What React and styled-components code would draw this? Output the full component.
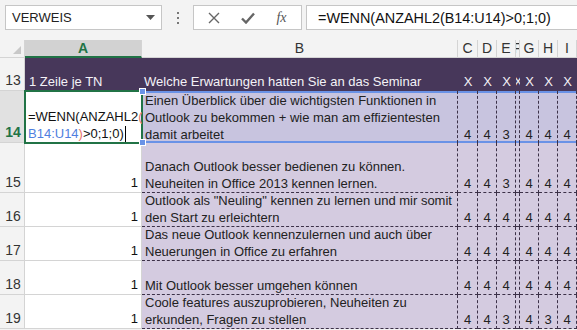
import React from "react";
import styled, { createGlobalStyle, css } from "styled-components";

const GREEN = "#217346";
const BLUE = "#6a92e6";
const PURPLE = "#47375a";
const GRID = "#d4d4d4";
const DASH = "#3c3148";

const GlobalStyle = createGlobalStyle`
  html, body {
    margin: 0;
    padding: 0;
    background: #f3f3f3;
    overflow: hidden;
  }
  body {
    font-family: "Liberation Sans", Arial, sans-serif;
  }
`;

const Page = styled.div`
  width: 577px;
  height: 330px;
  overflow: hidden;
  background: #f3f3f3;
`;

const Toolbar = styled.div`
  height: 40px;
  box-sizing: border-box;
  padding: 5px 0 0 5px;
  display: flex;
  align-items: flex-start;
`;

const Box = styled.div`
  height: 25px;
  box-sizing: border-box;
  background: #fff;
  border: 1px solid #c6c6c6;
  display: flex;
  align-items: center;
`;

const NameBox = styled(Box)`
  width: 157px;
  padding: 0 6px 0 6px;
  justify-content: space-between;
  font-size: 13px;
  color: #222;
`;

const Dots = styled.div`
  width: 31px;
  height: 25px;
  display: flex;
  flex-direction: column;
  align-items: center;
  justify-content: center;
  gap: 3px;

  span {
    width: 2px;
    height: 2px;
    background: #777;
  }
`;

const FxButtons = styled(Box)`
  width: 109px;
  justify-content: space-around;
  padding: 0 4px;
  color: #666;
`;

const FxLabel = styled.span`
  font-family: "Liberation Serif", "Times New Roman", serif;
  font-style: italic;
  font-size: 14px;
  color: #555;
`;

const FormulaBox = styled(Box)`
  flex: 1;
  margin-left: 4px;
  margin-right: -2px;
  padding-left: 11px;
  font-size: 14.4px;
  color: #111;
`;

const Sheet = styled.div`
  display: grid;
  grid-template-columns: 25px 117px 316px 20px 19px 19px 4px 19px 19px 19px;
  grid-template-rows: 18px 33px 52px 50px 34px 34px 34px 34px;
  font-size: 13px;
  line-height: 17px;
`;

const Corner = styled.div`
  background: #f3f3f3;
  border-right: 1px solid ${GRID};
  border-bottom: 1px solid ${GRID};
  box-sizing: border-box;
  position: relative;

  &::after {
    content: "";
    position: absolute;
    right: 3px;
    bottom: 3px;
    border-left: 8px solid transparent;
    border-bottom: 8px solid #c8c8c8;
  }
`;

const ColHead = styled.div`
  box-sizing: border-box;
  background: #f3f3f3;
  border-right: 1px solid ${GRID};
  border-bottom: 1px solid ${GRID};
  color: #333;
  font-size: 14px;
  display: flex;
  align-items: center;
  justify-content: center;
  overflow: hidden;

  ${(p) =>
    p.$active &&
    css`
      background: #d2d2d2;
      color: ${GREEN};
      font-weight: bold;
      border-bottom: 2px solid ${GREEN};
    `}
`;

const RowHead = styled.div`
  box-sizing: border-box;
  background: #f3f3f3;
  border-right: 1px solid ${GRID};
  border-bottom: 1px solid ${GRID};
  color: #333;
  font-size: 14px;
  display: flex;
  align-items: flex-end;
  justify-content: center;
  padding: 0 0 1px 2px;

  ${(p) =>
    p.$active &&
    css`
      background: #e1e1e1;
      color: ${GREEN};
      font-weight: bold;
    `}
`;

const HeadCell = styled.div`
  background: ${PURPLE};
  color: #f4f2f7;
  display: flex;
  align-items: flex-end;
  justify-content: ${(p) => (p.$center ? "center" : "flex-start")};
  padding: 0 0 1px ${(p) => (p.$center ? 0 : p.$pad)}px;
  white-space: nowrap;
  overflow: ${(p) => (p.$center ? "hidden" : "visible")};
  box-sizing: border-box;
`;

const CountCell = styled.div`
  box-sizing: border-box;
  background: #fff;
  border-right: 1px solid ${GRID};
  border-bottom: 1px solid ${GRID};
  display: flex;
  align-items: flex-end;
  justify-content: flex-end;
  padding: 0 3px 1px 0;
  color: #111;
`;

const EditCell = styled.div`
  position: relative;
  z-index: 2;
  background: #fff;
  box-shadow: 0 0 0 1px ${GREEN}, inset 0 0 0 1px ${GREEN};
  display: flex;
  flex-direction: column;
  justify-content: flex-end;
  padding: 0 0 1px 3px;
  overflow: hidden;
  color: #111;
  white-space: nowrap;
`;

const Ref = styled.span`
  color: ${(p) => (p.$paren ? "#e8736f" : "#4f7fe0")};
`;

const Caret = styled.span`
  display: inline-block;
  width: 1px;
  height: 16px;
  background: #000;
  vertical-align: -4px;
  margin-left: 1px;
`;

const DataCell = styled.div`
  position: relative;
  box-sizing: border-box;
  background: ${(p) => (p.$ref ? "#c8c4df" : "#d4cbe0")};
  border-right: 1px dashed ${DASH};
  border-bottom: 1px dashed ${DASH};
  display: flex;
  flex-direction: column;
  justify-content: flex-end;
  align-items: ${(p) => (p.$center ? "center" : "flex-start")};
  padding: 0 0 0 ${(p) => (p.$center ? 0 : 3)}px;
  color: #222;
  white-space: nowrap;
  overflow: ${(p) => (p.$center ? "hidden" : "visible")};

  ${(p) =>
    p.$ref &&
    css`
      border-bottom: none;
      box-shadow: inset 0 2px ${BLUE}, inset 0 -2px ${BLUE};
    `}
`;

const Handle = styled.span`
  position: absolute;
  left: -3px;
  ${(p) => (p.$bottom ? "bottom: -3px;" : "top: -3px;")}
  width: 5px;
  height: 5px;
  background: ${BLUE};
  border: 1px solid #fff;
  z-index: 3;
`;

const Line = styled.div``;

const cols = ["C", "D", "E", "F", "G", "H", "I"];

const rows = [
  {
    n: 15,
    h: ["", "Danach Outlook besser bedienen zu können.", "Neuheiten in Office 2013 kennen lernen."],
    v: ["4", "4", "3", "", "4", "4", "4"],
  },
  {
    n: 16,
    h: ["Outlook als \"Neuling\" kennen zu lernen und mir somit", "den Start zu erleichtern"],
    v: ["4", "4", "4", "", "4", "4", "4"],
  },
  {
    n: 17,
    h: ["Das neue Outlook kennenzulernen und auch über", "Neuerungen in Office zu erfahren"],
    v: ["4", "4", "4", "", "4", "4", "4"],
  },
  {
    n: 18,
    h: ["Mit Outlook besser umgehen können"],
    v: ["4", "4", "4", "", "4", "4", "4"],
  },
  {
    n: 19,
    h: ["Coole features auszuprobieren, Neuheiten zu", "erkunden, Fragen zu stellen"],
    v: ["4", "4", "3", "", "4", "3", "4"],
  },
];

const row14 = ["4", "4", "3", "", "4", "4", "4"];

const App = () => {
  return (
    <Page>
      <GlobalStyle />
      <Toolbar>
        <NameBox>
          <span>VERWEIS</span>
          <svg width="9" height="5" viewBox="0 0 9 5">
            <path d="M0 0h9L4.5 5z" fill="#555" />
          </svg>
        </NameBox>
        <Dots>
          <span />
          <span />
          <span />
        </Dots>
        <FxButtons>
          <svg width="12" height="12" viewBox="0 0 12 12">
            <path d="M1 1l10 10M11 1L1 11" stroke="#666" strokeWidth="1.4" />
          </svg>
          <svg width="14" height="12" viewBox="0 0 14 12">
            <path d="M1 6.5l4 4L13 1.5" stroke="#666" strokeWidth="2.4" fill="none" />
          </svg>
          <FxLabel>fx</FxLabel>
        </FxButtons>
        <FormulaBox>=WENN(ANZAHL2(B14:U14)&gt;0;1;0)</FormulaBox>
      </Toolbar>

      <Sheet>
        <Corner />
        <ColHead $active>A</ColHead>
        <ColHead>B</ColHead>
        {cols.map((c) => (
          <ColHead key={c}>{c}</ColHead>
        ))}

        <RowHead>13</RowHead>
        <HeadCell $pad={4}>1 Zeile je TN</HeadCell>
        <HeadCell $pad={2}>Welche Erwartungen hatten Sie an das Seminar</HeadCell>
        {cols.map((c) => (
          <HeadCell key={c} $center>
            X
          </HeadCell>
        ))}

        <RowHead $active>14</RowHead>
        <EditCell>
          <Line>
            =WENN(ANZAHL2<Ref $paren>(</Ref>
          </Line>
          <Line>
            <Ref>B14:U14</Ref>
            <Ref $paren>)</Ref>&gt;0;1;0)
            <Caret />
          </Line>
        </EditCell>
        <DataCell $ref>
          <Handle />
          <Handle $bottom />
          <Line>Einen Überblick über die wichtigsten Funktionen in</Line>
          <Line>Outlook zu bekommen + wie man am effizientesten</Line>
          <Line>damit arbeitet</Line>
        </DataCell>
        {row14.map((v, i) => (
          <DataCell key={i} $ref $center>
            <Line>{v}</Line>
          </DataCell>
        ))}

        {rows.map((r) => (
          <React.Fragment key={r.n}>
            <RowHead>{r.n}</RowHead>
            <CountCell>1</CountCell>
            <DataCell>
              {r.h.map((t, i) => (
                <Line key={i}>{t || "\u00a0"}</Line>
              ))}
            </DataCell>
            {r.v.map((v, i) => (
              <DataCell key={i} $center>
                <Line>{v}</Line>
              </DataCell>
            ))}
          </React.Fragment>
        ))}
      </Sheet>
    </Page>
  );
};

export default App;
